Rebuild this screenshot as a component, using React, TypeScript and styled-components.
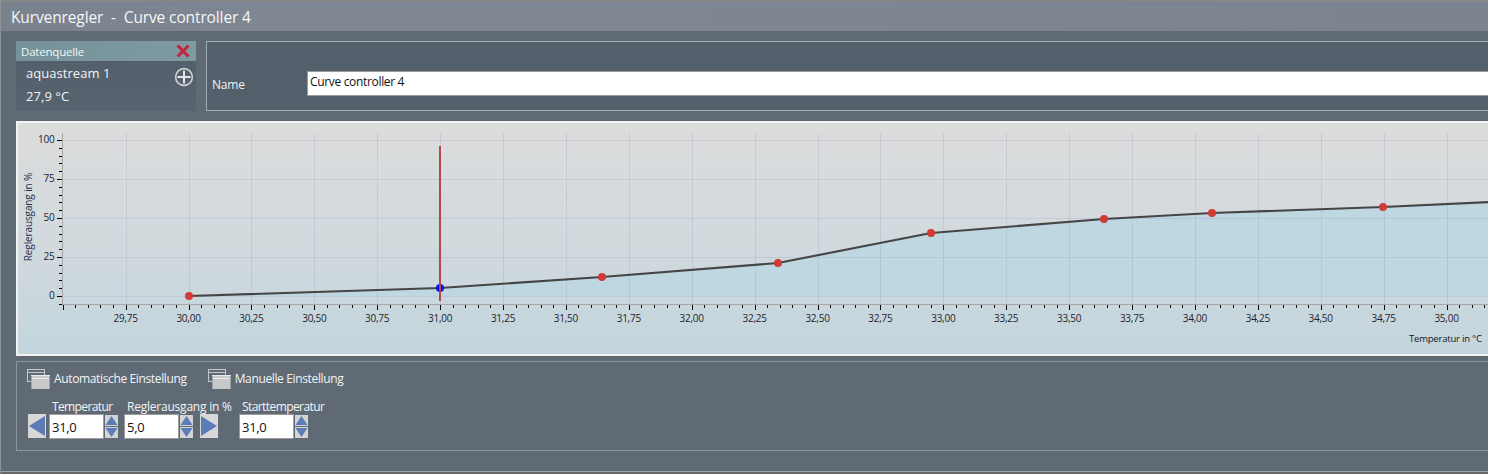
import React from "react";
import styled, { createGlobalStyle } from "styled-components";

const Global = createGlobalStyle`
  html, body { margin: 0; padding: 0; background: #5f6a74; overflow: hidden; }
  #root { width: 1488px; height: 474px; overflow: hidden; }
`;

const uiFont = `"Open Sans", "Noto Sans", "Liberation Sans", sans-serif`;

const Window = styled.div`
  width: 1488px;
  height: 474px;
  box-sizing: border-box;
  overflow: hidden;
  display: flex;
  flex-direction: column;
  background: #5f6a74;
  border-top: 1px solid #8c8985;
  border-left: 1px solid #8f9498;
  border-bottom: 2px solid #6b6661;
  font-family: ${uiFont};
  color: #f2f5f6;
`;

const TitleBar = styled.div`
  height: 30px;
  flex: none;
  box-sizing: border-box;
  padding: 2px 0 0 10px;
  display: flex;
  align-items: center;
  background-color: #7c848f;
  background-image:
    radial-gradient(circle, rgba(255, 255, 255, 0.025) 0.7px, transparent 1px),
    linear-gradient(90deg, #79828c 0%, #7f8792 20%, #7b848e 100%);
  background-size: 4px 4px, 100% 100%;
  font-size: 15.5px;
  letter-spacing: -0.12px;
  white-space: pre;
  color: #f4f6f7;
`;

const Body = styled.div`
  flex: 1;
  min-height: 0;
  display: flex;
  flex-direction: column;
  padding: 10px 0 0 15px;
  width: 1540px;
  box-sizing: border-box;
  border-bottom: 1px solid #9aa5aa;
`;

const TopRow = styled.div`
  display: flex;
  height: 70px;
  gap: 10px;
  flex: none;
`;

const SourceCard = styled.div`
  width: 180px;
  flex: none;
  position: relative;
  background: linear-gradient(180deg, #525e6a, #57636e);
`;

const SourceHead = styled.div`
  height: 20px;
  display: flex;
  align-items: center;
  justify-content: space-between;
  padding: 0 6px 0 5px;
  font-size: 11.5px;
  letter-spacing: -0.2px;
  background: linear-gradient(90deg, #75929a, #7d9ba1);
`;

const SourceLine = styled.div<{ $h: number }>`
  height: ${(p) => p.$h}px;
  padding-left: 10px;
  display: flex;
  align-items: center;
  font-size: 13px;
  letter-spacing: 0.05px;
`;

const AddIcon = styled.svg`
  position: absolute;
  right: 2px;
  top: 26px;
`;

const NamePanel = styled.div`
  flex: 1;
  display: flex;
  align-items: flex-start;
  box-sizing: border-box;
  padding: 29px 0 0 5px;
  background: #535f6a;
  border: 1px solid #a3adb3;
`;

const NameLabel = styled.div`
  width: 95px;
  flex: none;
  font-size: 12px;
  letter-spacing: -0.2px;
  line-height: 17px;
  padding-top: 5px;
`;

const NameInput = styled.div`
  flex: 1;
  height: 25px;
  box-sizing: border-box;
  padding: 1px 0 0 2px;
  background: #fff;
  border: 1px solid #9b9b9b;
  color: #111;
  font-size: 12px;
  letter-spacing: -0.33px;
  line-height: 17px;
`;

const ChartFrame = styled.div`
  height: 235px;
  flex: none;
  margin-top: 10px;
  box-sizing: border-box;
  border: 2px solid #f2f4f4;
  background: linear-gradient(180deg, #dcdcdc 0%, #d3dadd 45%, #c3d5dd 100%);
  overflow: hidden;
`;

const ChartSvg = styled.svg`
  display: block;
  font-family: ${uiFont};
`;

const Controls = styled.div`
  height: 90px;
  flex: none;
  box-sizing: border-box;
  margin-top: 5px;
  padding: 6px 0 0 10px;
  border: 1px solid #8d989e;
`;

const ModeRow = styled.div`
  display: flex;
  height: 21px;
  gap: 21px;
`;

const ModeButton = styled.div`
  display: flex;
  align-items: center;
  gap: 4px;
  font-size: 12px;
  letter-spacing: -0.36px;
  white-space: nowrap;
`;

const FieldRow = styled.div`
  display: flex;
  align-items: flex-end;
  margin-top: 10px;
`;

const ArrowButton = styled.div<{ $ml?: number; $mr?: number }>`
  width: 18px;
  height: 24px;
  flex: none;
  margin: 0 ${(p) => p.$mr ?? 0}px 1px ${(p) => p.$ml ?? 0}px;
  background: #d8d8d8;
  display: flex;
  align-items: center;
  justify-content: center;
`;

const Field = styled.div<{ $ml?: number }>`
  width: 69px;
  flex: none;
  margin-left: ${(p) => p.$ml ?? 0}px;
  font-size: 12px;
`;

const FieldLabel = styled.div<{ $track: number }>`
  margin-left: 3px;
  white-space: nowrap;
  line-height: 15px;
  letter-spacing: ${(p) => p.$track}px;
`;

const Spinner = styled.div`
  display: flex;
  align-items: flex-start;
  gap: 1px;
`;

const NumberBox = styled.div`
  width: 55px;
  height: 25px;
  box-sizing: border-box;
  background: #fff;
  border: 1px solid #9d9d9d;
  padding: 1px 0 0 2px;
  color: #111;
  font-size: 13px;
  line-height: 23px;
  letter-spacing: -0.3px;
`;

const SpinColumn = styled.div`
  display: flex;
  flex-direction: column;
  gap: 1px;
  padding-top: 1px;
`;

const SpinButton = styled.div`
  width: 13px;
  height: 11px;
  background: #d4d4d4;
  display: flex;
  align-items: center;
  justify-content: center;
`;

const Tri: React.FC<{ dir: "up" | "down" }> = ({ dir }) => (
  <svg width="13" height="11" viewBox="0 0 13 11">
    <polygon points={dir === "up" ? "6.5,1 12.5,10 0.5,10" : "0.5,1 12.5,1 6.5,10"} fill="#5b7cb6" />
  </svg>
);

const ArrowIcon: React.FC<{ dir: "left" | "right" }> = ({ dir }) => (
  <svg width="18" height="24" viewBox="0 0 18 24">
    <polygon points={dir === "left" ? "1,12 17,2 17,22" : "1,2 17,12 1,22"} fill="#5b7cb6" />
  </svg>
);

const WindowsIcon = () => (
  <svg width="23" height="20" viewBox="0 0 23 20" shapeRendering="crispEdges">
    <rect x="0.5" y="0.5" width="17" height="12" fill="#5f6a74" stroke="#c3c9cd" />
    <line x1="0" y1="3.5" x2="18" y2="3.5" stroke="#c3c9cd" />
    <rect x="4" y="6" width="19" height="14" fill="#c6c8ca" />
    <rect x="4" y="6" width="19" height="1" fill="#e8eaeb" />
    <rect x="4" y="9" width="19" height="1" fill="#e8eaeb" />
    <rect x="4" y="7" width="1" height="13" fill="#9ea4a8" />
    <rect x="22" y="7" width="1" height="13" fill="#9ea4a8" />
  </svg>
);

const xOf = (v: number) => 188.5 + (v - 30) * 251.6;
const yOf = (v: number) => 296 - v * 1.56;

const curve: [number, number][] = [
  [189, 296],
  [440, 288],
  [602, 277],
  [778, 263],
  [931, 233],
  [1104, 219],
  [1212, 213],
  [1383, 207],
  [1490, 202],
];

const xMajors = Array.from({ length: 23 }, (_, i) => 29.5 + i * 0.25);
const xMinors = Array.from({ length: 115 }, (_, i) => 29.5 + i * 0.05).filter((_, i) => i % 5 !== 0);
const yMajors = [0, 25, 50, 75, 100];
const yMinors = Array.from({ length: 21 }, (_, i) => -5 + i * 5).filter((v) => v % 25 !== 0);
const fmt = (v: number) => v.toFixed(2).replace(".", ",");

const CurveChart = () => {
  const linePts = curve.map((p) => p.join(",")).join(" ");
  const fillPts = `${linePts} 1490,296`;
  return (
    <ChartSvg width="1540" height="231" viewBox="18 123 1540 231">
      <polygon points={fillPts} fill="#bfd7e1" />
      <g stroke="#7878be" strokeOpacity="0.16" shapeRendering="crispEdges">
        {yMajors.map((v) => (
          <line key={v} x1="62" x2="1558" y1={Math.round(yOf(v)) + 0.5} y2={Math.round(yOf(v)) + 0.5} />
        ))}
        {xMajors.slice(1).map((v) => (
          <line key={v} y1="133" y2="304" x1={Math.round(xOf(v)) + 0.5} x2={Math.round(xOf(v)) + 0.5} />
        ))}
      </g>
      <g stroke="#000" shapeRendering="crispEdges">
        {xMajors.map((v) => (
          <line key={v} y1="304" y2="310" x1={Math.round(xOf(v)) + 0.5} x2={Math.round(xOf(v)) + 0.5} strokeWidth="1.1" />
        ))}
        {xMinors.map((v) => (
          <line key={v} y1="304" y2="308" x1={Math.round(xOf(v)) + 0.5} x2={Math.round(xOf(v)) + 0.5} />
        ))}
        {yMajors.map((v) => (
          <line key={v} x1="57" x2="62" y1={Math.round(yOf(v)) + 0.5} y2={Math.round(yOf(v)) + 0.5} />
        ))}
        {yMinors.map((v) => (
          <line key={v} x1="59" x2="62" y1={Math.round(yOf(v)) + 0.5} y2={Math.round(yOf(v)) + 0.5} />
        ))}
      </g>
      <g stroke="#a6a6a6" shapeRendering="crispEdges">
        <line x1="62.5" x2="62.5" y1="133" y2="305" />
        <line x1="62" x2="1558" y1="304.5" y2="304.5" />
      </g>
      <polyline points={linePts} fill="none" stroke="#454545" strokeWidth="2.1" />
      {curve.slice(0, 8).map(([x, y], i) => (
        <circle key={x} cx={x} cy={y} r="4" fill={i === 1 ? "#0b0bf0" : "#d23a38"} />
      ))}
      <line x1="440" x2="440" y1="146" y2="301" stroke="#b04a4a" strokeWidth="2" shapeRendering="crispEdges" />
      <g fontSize="10" fill="#1c2430" letterSpacing="-0.25" textAnchor="middle">
        {xMajors.slice(1).map((v) => (
          <text key={v} x={xOf(v)} y="322">
            {fmt(v)}
          </text>
        ))}
      </g>
      <g fontSize="10" fill="#1c2430" letterSpacing="-0.2" textAnchor="end">
        {yMajors.map((v) => (
          <text key={v} x="54.5" y={yOf(v) + 3}>
            {v}
          </text>
        ))}
      </g>
      <text
        x="31.5"
        y="217"
        fontSize="10"
        fill="#1f2c4c"
        letterSpacing="-0.12"
        textAnchor="middle"
        transform="rotate(-90 31.5 217)"
      >
        Reglerausgang in %
      </text>
      <text x="1409" y="342" fontSize="9.5" fill="#111a24" letterSpacing="-0.2">
        Temperatur in °C
      </text>
    </ChartSvg>
  );
};

const NumberField: React.FC<{ label: string; value: string; track: number; ml?: number }> = ({
  label,
  value,
  track,
  ml,
}) => (
  <Field $ml={ml}>
    <FieldLabel $track={track}>{label}</FieldLabel>
    <Spinner>
      <NumberBox>{value}</NumberBox>
      <SpinColumn>
        <SpinButton>
          <Tri dir="up" />
        </SpinButton>
        <SpinButton>
          <Tri dir="down" />
        </SpinButton>
      </SpinColumn>
    </Spinner>
  </Field>
);

export default function App() {
  return (
    <>
      <Global />
      <Window>
        <TitleBar>{"Kurvenregler  -  Curve controller 4"}</TitleBar>
        <Body>
          <TopRow>
            <SourceCard>
              <SourceHead>
                Datenquelle
                <svg width="14" height="14" viewBox="0 0 14 14">
                  <path d="M1.5 1.5 L12.5 12.5 M12.5 1.5 L1.5 12.5" stroke="#c4233b" strokeWidth="3" fill="none" />
                </svg>
              </SourceHead>
              <SourceLine $h={24}>aquastream 1</SourceLine>
              <SourceLine $h={22}>27,9 °C</SourceLine>
              <AddIcon width="20" height="20" viewBox="0 0 20 20">
                <circle cx="10" cy="10" r="8.4" fill="none" stroke="#ced3d6" strokeWidth="1.6" />
                <path d="M10 3.5 V16.5 M3.5 10 H16.5" stroke="#e6e9ea" strokeWidth="2" fill="none" />
              </AddIcon>
            </SourceCard>
            <NamePanel>
              <NameLabel>Name</NameLabel>
              <NameInput>Curve controller 4</NameInput>
            </NamePanel>
          </TopRow>
          <ChartFrame>
            <CurveChart />
          </ChartFrame>
          <Controls>
            <ModeRow>
              <ModeButton>
                <WindowsIcon />
                Automatische Einstellung
              </ModeButton>
              <ModeButton>
                <WindowsIcon />
                Manuelle Einstellung
              </ModeButton>
            </ModeRow>
            <FieldRow>
              <ArrowButton $ml={1} $mr={3}>
                <ArrowIcon dir="left" />
              </ArrowButton>
              <NumberField label="Temperatur" value="31,0" track={-0.62} />
              <NumberField label="Reglerausgang in %" value="5,0" track={-0.22} ml={6} />
              <ArrowButton $ml={7}>
                <ArrowIcon dir="right" />
              </ArrowButton>
              <NumberField label="Starttemperatur" value="31,0" track={-0.58} ml={21} />
            </FieldRow>
          </Controls>
        </Body>
      </Window>
    </>
  );
}
